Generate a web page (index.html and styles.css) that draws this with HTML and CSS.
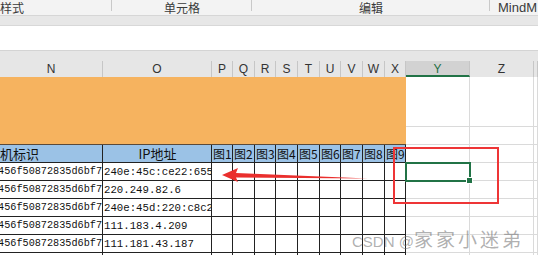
FILE: index.html
```html
<!DOCTYPE html>
<html lang="zh-CN">
<head>
    <meta charset="UTF-8">
    <meta name="viewport" content="width=device-width, initial-scale=1.0">
    <title>工作表</title>
    <link rel="stylesheet" href="styles.css">
</head>
<body>
<div class="page">
    <div class="ribbon">
        <div class="group g-style">样式</div>
        <div class="group g-cell">单元格</div>
        <div class="group g-edit">编辑</div>
        <div class="group g-mind">MindM</div>
    </div>
    <div class="band"></div>
    <div class="formula"></div>
    <div class="gap"></div>

    <div class="sheet">
        <!-- column headers -->
        <div class="col-head">N</div>
        <div class="col-head">O</div>
        <div class="col-head">P</div>
        <div class="col-head">Q</div>
        <div class="col-head">R</div>
        <div class="col-head">S</div>
        <div class="col-head">T</div>
        <div class="col-head">U</div>
        <div class="col-head">V</div>
        <div class="col-head">W</div>
        <div class="col-head">X</div>
        <div class="col-head active">Y</div>
        <div class="col-head">Z</div>
        <div class="col-head"></div>

        <!-- merged orange block -->
        <div class="merged"></div>
        <div class="cell tall"></div>
        <div class="cell tall"></div>
        <div class="cell tall"></div>
        <div class="cell"></div>
        <div class="cell"></div>
        <div class="cell"></div>

        <!-- table header -->
        <div class="th th-left">机标识</div>
        <div class="th th-center">IP地址</div>
        <div class="th">图1</div>
        <div class="th">图2</div>
        <div class="th">图3</div>
        <div class="th">图4</div>
        <div class="th">图5</div>
        <div class="th">图6</div>
        <div class="th">图7</div>
        <div class="th">图8</div>
        <div class="th last">图9</div>
        <div class="cell"></div>
        <div class="cell"></div>
        <div class="cell"></div>

        <div class="td id"><span>456f50872835d6bf7</span></div>
        <div class="td ip">240e:45c:ce22:655</div>
        <div class="td"></div><div class="td"></div><div class="td"></div><div class="td"></div><div class="td"></div><div class="td"></div><div class="td"></div><div class="td"></div><div class="td"></div>
        <div class="cell"></div><div class="cell"></div><div class="cell"></div>

        <div class="td id"><span>456f50872835d6bf7</span></div>
        <div class="td ip">220.249.82.6</div>
        <div class="td"></div><div class="td"></div><div class="td"></div><div class="td"></div><div class="td"></div><div class="td"></div><div class="td"></div><div class="td"></div><div class="td"></div>
        <div class="cell"></div><div class="cell"></div><div class="cell"></div>

        <div class="td id"><span>456f50872835d6bf7</span></div>
        <div class="td ip">240e:45d:220:c8c2</div>
        <div class="td"></div><div class="td"></div><div class="td"></div><div class="td"></div><div class="td"></div><div class="td"></div><div class="td"></div><div class="td"></div><div class="td"></div>
        <div class="cell"></div><div class="cell"></div><div class="cell"></div>

        <div class="td id"><span>456f50872835d6bf7</span></div>
        <div class="td ip">111.183.4.209</div>
        <div class="td"></div><div class="td"></div><div class="td"></div><div class="td"></div><div class="td"></div><div class="td"></div><div class="td"></div><div class="td"></div><div class="td"></div>
        <div class="cell"></div><div class="cell"></div><div class="cell"></div>

        <div class="td id"><span>456f50872835d6bf7</span></div>
        <div class="td ip">111.181.43.187</div>
        <div class="td"></div><div class="td"></div><div class="td"></div><div class="td"></div><div class="td"></div><div class="td"></div><div class="td"></div><div class="td"></div><div class="td"></div>
        <div class="cell"></div><div class="cell"></div><div class="cell"></div>

        <div class="td id"></div>
        <div class="td ip"></div>
        <div class="td"></div><div class="td"></div><div class="td"></div><div class="td"></div><div class="td"></div><div class="td"></div><div class="td"></div><div class="td"></div><div class="td"></div>
        <div class="cell"></div><div class="cell"></div><div class="cell"></div>
    </div>

    <!-- overlays -->
    <div class="selection"><span class="handle"></span></div>
    <div class="mark-box"></div>
    <svg class="arrow" width="160" height="24" viewBox="220 164 160 24">
        <path d="M222 175 L238 168 L236 173 L368 178.5 L236 177.5 L238 182 Z" fill="#ea2f2d"/>
    </svg>
    <div class="watermark">CSDN @<span class="wm-name">家家小迷弟</span></div>
</div>
</body>
</html>
```

FILE: styles.css
```css
body {
    margin: 0;
    font-family: "Noto Sans CJK SC", "Liberation Sans", sans-serif;
    background: #fff;
    overflow: hidden;
}
.page {
    position: relative;
    width: 538px;
    height: 255px;
    overflow: hidden;
}
.ribbon {
    display: flex;
    height: 15px;
    background: #f3f3f3;
    border-bottom: 1px solid #d6d6d6;
    font-size: 12px;
    color: #3a3a3a;
}
.group {
    box-sizing: border-box;
    height: 15px;
    line-height: 15px;
    position: relative;
    white-space: nowrap;
}
.group::after {
    content: "";
    position: absolute;
    right: 0;
    top: 0;
    height: 11px;
    border-right: 1px solid #c9c9c9;
}
.g-style {
    width: 112px;
}
.g-cell {
    width: 140px;
    text-align: center;
}
.g-edit {
    width: 238px;
    text-align: center;
}
.g-mind {
    padding-left: 8px;
    font-family: "Liberation Sans", sans-serif;
    font-size: 13px;
}
.g-mind::after {
    display: none;
}
.band {
    height: 9px;
    background: #e7e7e7;
    border-bottom: 1px solid #d8d8d8;
}
.formula {
    height: 24px;
    background: #fff;
    border-bottom: 1px solid #d4d4d4;
}
.gap {
    height: 10px;
    background: #e6e6e6;
}
.sheet {
    display: grid;
    grid-template-columns: 103px 109px 21px 22px 21px 22px 22px 21px 22px 22px 21px 64px 64px 1fr;
    grid-template-rows: 16px 50px 18px repeat(7, 18px);
}
.sheet > div {
    box-sizing: border-box;
}
.col-head {
    background: #e6e6e6;
    border-right: 1px solid #c6c6c6;
    font-family: "Liberation Sans", sans-serif;
    font-size: 12px;
    line-height: 16px;
    text-align: center;
    color: #333;
}
.col-head.active {
    background: #d2d2d2;
    color: #1f6e43;
    border-bottom: 2px solid #217346;
}
.merged {
    grid-column: 1 / 12;
    grid-row: 2 / 4;
    background: #f6b35f;
    border-bottom: 1px solid #5a4a3a;
}
.cell {
    border-right: 1px solid #dadada;
    border-bottom: 1px solid #dadada;
}
.th {
    background: #9bc2e6;
    border-right: 1px solid #222;
    border-bottom: 1px solid #222;
    font-size: 12px;
    line-height: 17px;
    white-space: nowrap;
    overflow: hidden;
    padding-left: 1px;
    color: #111;
}
.th.last {
    overflow: visible;
}
.th-left {
    font-size: 13px;
    padding-left: 0;
}
.th-center {
    font-size: 13px;
    text-align: center;
}
.td {
    border-right: 1px solid #222;
    border-bottom: 1px solid #222;
    font-family: "Liberation Mono", monospace;
    font-size: 10.7px;
    line-height: 18px;
    white-space: nowrap;
    overflow: hidden;
    color: #111;
}
.td.id {
    display: flex;
    justify-content: flex-end;
    font-size: 10.2px;
}
.td.ip {
    padding-left: 1px;
}
.selection {
    position: absolute;
    left: 405px;
    top: 162px;
    width: 66px;
    height: 20px;
    box-sizing: border-box;
    border: 2px solid #217346;
}
.handle {
    position: absolute;
    right: -4px;
    bottom: -4px;
    width: 5px;
    height: 5px;
    background: #217346;
    border: 1px solid #fff;
}
.mark-box {
    position: absolute;
    left: 393px;
    top: 147px;
    width: 106px;
    height: 57px;
    box-sizing: border-box;
    border: 2px solid #ee3536;
}
.arrow {
    position: absolute;
    left: 220px;
    top: 164px;
}
.watermark {
    position: absolute;
    left: 352px;
    top: 225px;
    font-family: "Liberation Sans", "Noto Sans CJK SC", sans-serif;
    font-size: 15px;
    color: rgba(110, 110, 110, 0.55);
    white-space: nowrap;
}
.wm-name {
    font-family: "Noto Sans CJK SC", sans-serif;
    font-size: 19px;
    letter-spacing: 3px;
}
```
